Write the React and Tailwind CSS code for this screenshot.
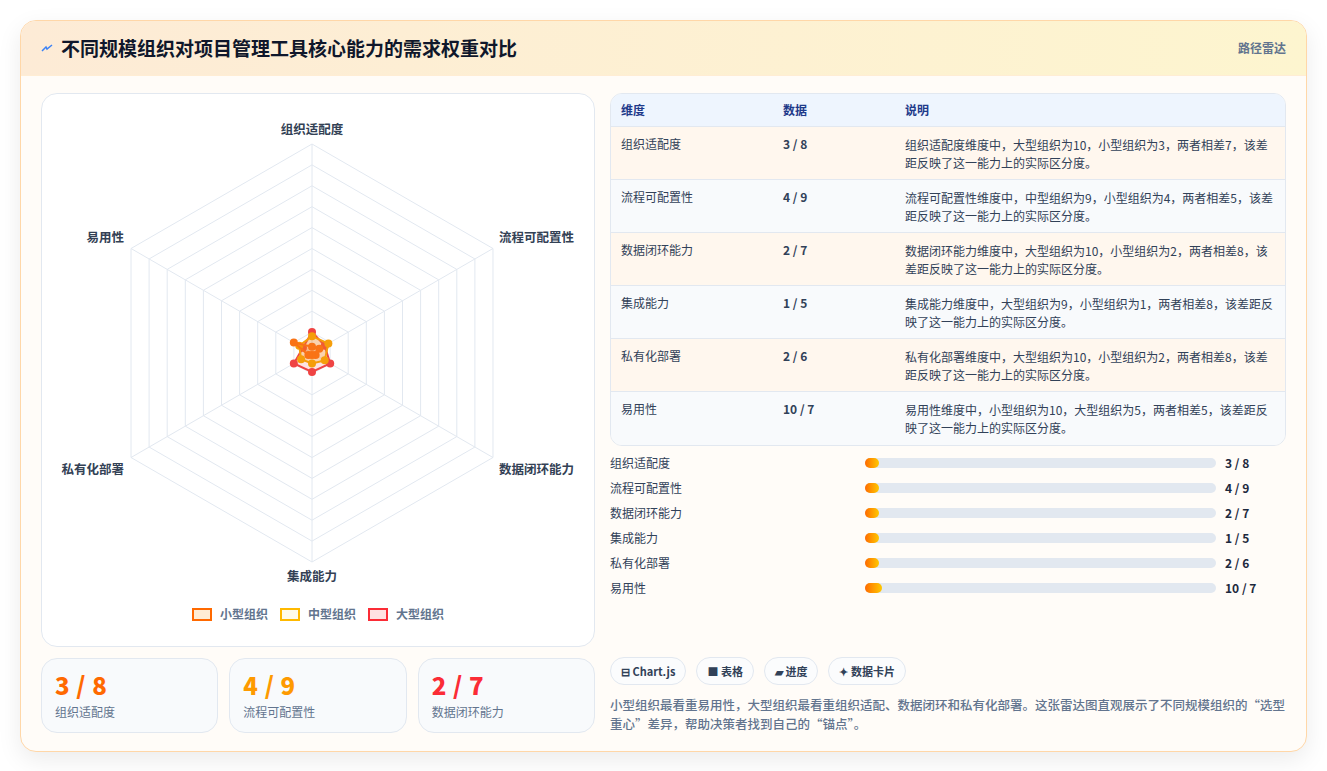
const dims = ["组织适配度", "流程可配置性", "数据闭环能力", "集成能力", "私有化部署", "易用性"];
const small = [3, 4, 2, 1, 2, 10];
const medium = [8, 9, 7, 5, 6, 7];
const large = [10, 7, 10, 9, 10, 5];

const rows = [
  ["组织适配度", "3 / 8", "组织适配度维度中，大型组织为10，小型组织为3，两者相差7，该差距反映了这一能力上的实际区分度。"],
  ["流程可配置性", "4 / 9", "流程可配置性维度中，中型组织为9，小型组织为4，两者相差5，该差距反映了这一能力上的实际区分度。"],
  ["数据闭环能力", "2 / 7", "数据闭环能力维度中，大型组织为10，小型组织为2，两者相差8，该差距反映了这一能力上的实际区分度。"],
  ["集成能力", "1 / 5", "集成能力维度中，大型组织为9，小型组织为1，两者相差8，该差距反映了这一能力上的实际区分度。"],
  ["私有化部署", "2 / 6", "私有化部署维度中，大型组织为10，小型组织为2，两者相差8，该差距反映了这一能力上的实际区分度。"],
  ["易用性", "10 / 7", "易用性维度中，小型组织为10，大型组织为5，两者相差5，该差距反映了这一能力上的实际区分度。"],
];

const CX = 270, CY = 259, R = 209;
const pt = (i, r) => {
  const a = -Math.PI / 2 + (i * Math.PI) / 3;
  return [CX + r * Math.cos(a), CY + r * Math.sin(a)];
};
const poly = (vals, scale) => vals.map((v, i) => pt(i, v * scale).join(",")).join(" ");

function Radar() {
  const rings = [1, 2, 3, 4, 5, 6, 7, 8, 9, 10];
  const series = [
    { v: large, stroke: "#ef4444", fill: "rgba(239,68,68,0.15)" },
    { v: medium, stroke: "#f59e0b", fill: "rgba(245,158,11,0.25)" },
    { v: small, stroke: "#f97316", fill: "rgba(249,115,22,0.25)" },
  ];
  const labelPos = [
    [CX, 40, "middle"], [457, 148, "start"], [457, 380, "start"],
    [CX, 487, "middle"], [82, 380, "end"], [82, 148, "end"],
  ];
  return (
    <svg width="552" height="500" viewBox="0 0 552 500">
      {rings.map((r) => (
        <polygon key={r} points={[0, 1, 2, 3, 4, 5].map((i) => pt(i, (R * r) / 10).join(",")).join(" ")} fill="none" stroke="#e2e8f0" strokeWidth="1" />
      ))}
      {[0, 1, 2, 3, 4, 5].map((i) => {
        const [x, y] = pt(i, R);
        return <line key={i} x1={CX} y1={CY} x2={x} y2={y} stroke="#e2e8f0" strokeWidth="1" />;
      })}
      {series.map((s, k) => (
        <g key={k}>
          <polygon points={poly(s.v, 2.1)} fill={s.fill} stroke={s.stroke} strokeWidth="2" />
          {s.v.map((v, i) => {
            const [x, y] = pt(i, v * 2.1);
            return <circle key={i} cx={x} cy={y} r="4" fill={s.stroke} />;
          })}
        </g>
      ))}
      {dims.map((d, i) => (
        <text key={d} x={labelPos[i][0]} y={labelPos[i][1]} textAnchor={labelPos[i][2]} fontSize="12.5" fontWeight="600" fill="#334155">{d}</text>
      ))}
    </svg>
  );
}

export default function App() {
  return (
    <div className="min-h-screen bg-white p-5 text-slate-700" style={{ fontFamily: '"Noto Sans CJK SC", "Noto Sans", sans-serif' }}>
      <div className="rounded-2xl border border-orange-200 bg-[#fffcf8] shadow-[0_8px_24px_rgba(0,0,0,0.08)] overflow-hidden">
        <div className="flex items-center justify-between h-[55px] px-5 bg-gradient-to-r from-[#fdebd6] to-[#fdf5cf] border-b border-orange-100">
          <div className="flex items-center gap-2">
            <svg width="12" height="12" viewBox="0 0 12 12"><path d="M1 9 L5 5 L6 7 L11 3" stroke="#3b82f6" strokeWidth="1.5" fill="none" /></svg>
            <h1 className="text-[19px] font-bold text-slate-900">不同规模组织对项目管理工具核心能力的需求权重对比</h1>
          </div>
          <span className="text-xs font-semibold text-slate-500">路径雷达</span>
        </div>
        <div className="flex gap-[15px] px-5 pt-[17px] pb-[18px]">
          <div className="w-[554px] flex flex-col gap-[11px]">
            <div className="h-[554px] rounded-2xl border border-slate-200 bg-white flex flex-col items-center">
              <Radar />
              <div className="flex items-center gap-2 text-xs font-semibold text-slate-500 mt-[12px]">
                <span className="w-[20px] h-[13px] border-2 border-orange-500 bg-orange-100" /> 小型组织
                <span className="w-[20px] h-[13px] border-2 border-amber-400 bg-amber-50 ml-1" /> 中型组织
                <span className="w-[20px] h-[13px] border-2 border-red-500 bg-red-100 ml-1" /> 大型组织
              </div>
            </div>
            <div className="grid grid-cols-3 gap-[11px]">
              {[["3 / 8", "组织适配度", "text-orange-500"], ["4 / 9", "流程可配置性", "text-amber-500"], ["2 / 7", "数据闭环能力", "text-red-500"]].map(([v, l, c]) => (
                <div key={l} className="h-[75px] rounded-2xl border border-slate-200 bg-[#f8fafc] px-[13px] pt-[11px]">
                  <div className={`text-[24px] font-extrabold leading-[30px] tracking-wide ${c}`}>{v}</div>
                  <div className="text-xs text-slate-500 mt-1">{l}</div>
                </div>
              ))}
            </div>
          </div>
          <div className="flex-1 flex flex-col">
            <div className="rounded-xl border border-slate-200 overflow-hidden">
              <div className="grid grid-cols-[162px_122px_1fr] h-[33px] items-center bg-[#eef5fe] text-xs font-semibold text-[#1e3a8a] border-b border-slate-200 px-[10px]">
                <span>维度</span><span>数据</span><span>说明</span>
              </div>
              {rows.map((r, i) => (
                <div key={r[0]} className={`grid grid-cols-[162px_122px_1fr] h-[53px] items-start pt-[9px] pl-[10px] pr-[6px] text-xs text-slate-700 ${i % 2 === 0 ? "bg-[#fff7ee]" : "bg-[#f8fafc]"} ${i < 5 ? "border-b border-slate-200" : ""}`}>
                  <span>{r[0]}</span>
                  <span className="font-semibold">{r[1]}</span>
                  <span className="leading-[18px]">{r[2]}</span>
                </div>
              ))}
            </div>
            <div className="flex flex-col gap-[7px] mt-[8px]">
              {rows.map((r) => (
                <div key={r[0]} className="flex items-center h-[18px] text-xs">
                  <span className="w-[255px] text-slate-700">{r[0]}</span>
                  <div className="w-[351px] h-[10px] rounded-full bg-slate-200">
                    <div className={`h-full rounded-full bg-gradient-to-r from-orange-500 to-yellow-400 ${r[1] === "10 / 7" ? "w-[17px]" : "w-[14px]"}`} />
                  </div>
                  <span className="ml-[9px] font-bold text-slate-800">{r[1]}</span>
                </div>
              ))}
            </div>
            <div className="flex gap-[10px] mt-auto">
              {["⊟ Chart.js", "■ 表格", "▰ 进度", "✦ 数据卡片"].map((t) => (
                <span key={t} className="h-[28px] px-[10px] flex items-center rounded-full border border-slate-200 bg-[#fbfcfd] text-[11px] font-semibold text-slate-700">{t}</span>
              ))}
            </div>
            <p className="mt-[10px] text-[12.5px] leading-[19px] text-slate-500 font-medium">
              小型组织最看重易用性，大型组织最看重组织适配、数据闭环和私有化部署。这张雷达图直观展示了不同规模组织的“选型重心”差异，帮助决策者找到自己的“锚点”。
            </p>
          </div>
        </div>
      </div>
    </div>
  );
}
